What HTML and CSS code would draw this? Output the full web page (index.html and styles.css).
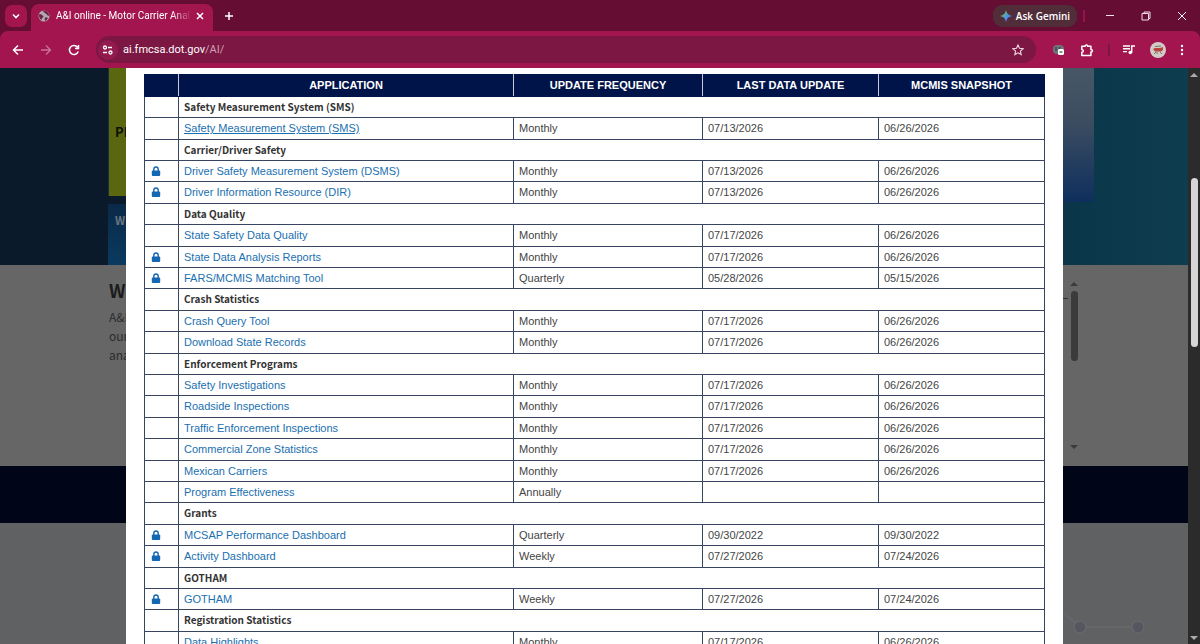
FILE: index.html
```html
<!DOCTYPE html>
<html lang="en">
<head>
    <meta charset="UTF-8">
    <meta name="viewport" content="width=device-width, initial-scale=1.0">
    <title>A&amp;I online - Motor Carrier Analysis</title>
    <link rel="stylesheet" href="styles.css">
</head>
<body>

<!-- Browser title bar -->
<header class="titlebar">
    <button class="tab-search" aria-label="Search tabs">
        <svg width="10" height="10" viewBox="0 0 10 10"><path d="M2 3.5l3 3 3-3" fill="none" stroke="#fff" stroke-width="1.6"/></svg>
    </button>
    <div class="tab">
        <svg class="globe" width="12" height="12" viewBox="0 0 12 12"><circle cx="6" cy="6" r="5.500" fill="#b4a9b1"/><path d="M1.200 4.200c1.800-.4 2.300.8 3.500 1.300s1 1.700-.2 2.200-.3 1.600-.8 2.200C1.500 8.800.6 6.500 1.200 4.200zM5.500.8c-.8 1.500 1 1.400 1.400 2.300S9 4 9.500 5.300s1 .4 1.700.2C11 2.800 8.800.6 5.500.8zM7.200 7.500c.9-.7 2.200-.3 2.700.5-.6 1.400-1.400 2.300-2.700 2.900-.7-1-.7-2.400 0-3.400z" fill="#6c2347"/></svg>
        <span class="tab-title">A&amp;I online - Motor Carrier Anal</span>
        <button class="tab-close" aria-label="Close tab">
            <svg width="8" height="8" viewBox="0 0 8 8"><path d="M1 1l6 6M7 1L1 7" stroke="#fff" stroke-width="1.500"/></svg>
        </button>
    </div>
    <button class="new-tab" aria-label="New tab">
        <svg width="10" height="10" viewBox="0 0 10 10"><path d="M5 1v8M1 5h8" stroke="#fff" stroke-width="1.500"/></svg>
    </button>
    <div class="window-controls">
        <button class="gemini">
            <svg width="12" height="12" viewBox="0 0 12 12"><defs><linearGradient id="spark" x1="0" y1="0" x2="1" y2="1"><stop offset="0" stop-color="#e8756a"/><stop offset=".35" stop-color="#5fae8c"/><stop offset=".6" stop-color="#4c8df0"/><stop offset="1" stop-color="#5b9bf5"/></linearGradient></defs><path d="M6 0c.6 3.600 2.400 5.400 6 6-3.600.6-5.400 2.400-6 6-.6-3.600-2.400-5.400-6-6 3.600-.6 5.400-2.400 6-6z" fill="url(#spark)"/></svg>
            Ask Gemini
        </button>
        <span class="divider"></span>
        <button aria-label="Minimize"><svg width="10" height="10" viewBox="0 0 10 10"><path d="M1 4.500h8" stroke="#f3dfe8"/></svg></button>
        <button aria-label="Restore"><svg width="10" height="10" viewBox="0 0 10 10"><path d="M1 2.500h6.500v6.500H1zM3 2.500V1h6v6.500H7.500" fill="none" stroke="#f3dfe8"/></svg></button>
        <button aria-label="Close"><svg width="10" height="10" viewBox="0 0 10 10"><path d="M1 1l8 8M9 1L1 9" stroke="#fff"/></svg></button>
    </div>
</header>

<!-- Address bar -->
<nav class="toolbar">
    <button aria-label="Back"><svg width="12" height="12" viewBox="0 0 12 12"><path d="M11 6H2M6 1.500L1.500 6 6 10.500" fill="none" stroke="#fff" stroke-width="1.500"/></svg></button>
    <button aria-label="Forward"><svg width="12" height="12" viewBox="0 0 12 12"><path d="M1 6h9M6 1.500L10.500 6 6 10.500" fill="none" stroke="#c9709a" stroke-width="1.300"/></svg></button>
    <button aria-label="Reload"><svg width="12" height="12" viewBox="0 0 12 12"><path d="M10.200 7.500A4.500 4.500 0 1 1 9.500 3.200M10.500 1v3.500H7" fill="none" stroke="#fff" stroke-width="1.500"/></svg></button>
    <div class="address">
        <button class="site-info" aria-label="Site information"><svg width="12" height="12" viewBox="0 0 12 12"><g fill="none" stroke="#fff" stroke-width="1.300"><circle cx="3" cy="3.500" r="1.500"/><path d="M6 3.500h4M1 8.500h4"/><circle cx="8.500" cy="8.500" r="1.500"/></g></svg></button>
        <a class="url" href="#">ai.fmcsa.dot.gov<span>/AI/</span></a>
        <button class="star" aria-label="Bookmark"><svg width="12" height="12" viewBox="0 0 12 12"><path d="M6 1l1.500 3.300 3.600.4-2.700 2.400.8 3.500L6 8.800l-3.200 1.800.8-3.500L.9 4.700l3.600-.4z" fill="none" stroke="#f0d5e2" stroke-width="1.100"/></svg></button>
    </div>
    <div class="extensions">
        <button aria-label="Extension"><svg width="14" height="14" viewBox="0 0 14 14"><rect x="1" y="2" width="11" height="9" rx="4" fill="#707479"/><path d="M4 4v4M7.500 4v2" stroke="#35434a" stroke-width="1.300"/><rect x="6" y="6" width="6" height="6" rx="1.500" fill="#fff"/><path d="M7.500 9h3" stroke="#4a7d56" stroke-width="1.500"/></svg></button>
        <button aria-label="Extensions"><svg width="14" height="14" viewBox="0 0 14 14"><path d="M1.800 3.300h3.400c-.3-1.900 2.800-1.900 2.500 0h3.200v3.200c1.900-.3 1.900 2.800 0 2.500v3.500H1.800V9.300c2-.2 2-2.600 0-2.800z" fill="none" stroke="#fff" stroke-width="1.500" stroke-linejoin="round"/></svg></button>
        <span class="divider dark"></span>
        <button aria-label="Media"><svg width="14" height="14" viewBox="0 0 14 14"><path d="M1 3h7M1 5.800h7M1 8.600h4" stroke="#fff" stroke-width="1.400"/><circle cx="8.300" cy="9.500" r="1.800" fill="#fff"/><path d="M9.700 9.500V3H13" fill="none" stroke="#fff" stroke-width="1.500"/></svg></button>
        <button aria-label="Profile"><svg width="16" height="16" viewBox="0 0 16 16"><circle cx="8" cy="8" r="8" fill="#d3cbc5"/><path d="M3 7l2-1h5l3-1v3l-2 1.500H5z" fill="#b8433e"/><path d="M5 4.500l6-.5M4 12l2-2M10 10l2 2M7 10v2" stroke="#77736d" fill="none"/></svg></button>
        <button aria-label="Menu"><svg width="4" height="12" viewBox="0 0 4 12"><g fill="#fff"><circle cx="2" cy="2" r="1.200"/><circle cx="2" cy="6" r="1.200"/><circle cx="2" cy="10" r="1.200"/></g></svg></button>
    </div>
</nav>

<div class="viewport">
    <div class="page">
        <!-- Dimmed page behind the dialog -->
        <div class="backdrop">
            <section class="hero">
                <div class="hero-tiles">
                    <div class="tile green">PI</div>
                    <div class="tile blue">W</div>
                </div>
                <div class="hero-panel"></div>
            </section>
            <section class="intro">
                <div class="intro-text">
                    <h2>W</h2>
                    <p>A&amp;I<br>our<br>ana</p>
                </div>
                <div class="news">
                    <span class="rule"></span>
                    <div class="news-scroll">
                        <span class="arrow up"></span>
                        <span class="news-thumb"></span>
                        <span class="arrow down"></span>
                    </div>
                </div>
            </section>
            <section class="band"></section>
            <section class="network">
                <svg width="96" height="50" viewBox="0 0 96 50"><path d="M0 14l16 14h58" fill="none" stroke="#66676b" stroke-width="2"/><g fill="#55565f" stroke="#66676b" stroke-width="1.500"><circle cx="16" cy="28" r="6"/><circle cx="74" cy="28" r="6"/></g></svg>
            </section>
        </div>

        <main class="modal">
            <table class="app-list" id="app-list">
                <colgroup>
                    <col class="col-lock"><col class="col-app"><col class="col-freq"><col class="col-update"><col class="col-snap">
                </colgroup>
                <thead>
                    <tr>
                        <th></th>
                        <th>APPLICATION</th>
                        <th>UPDATE FREQUENCY</th>
                        <th>LAST DATA UPDATE</th>
                        <th>MCMIS SNAPSHOT</th>
                    </tr>
                </thead>
                <tbody></tbody>
            </table>
        </main>
    </div>
    <div class="scrollbar">
        <span class="arrow up"></span>
        <span class="thumb"></span>
        <span class="arrow down"></span>
    </div>
</div>

<script>
    const groups = [
        { name: 'Safety Measurement System (SMS)', apps: [
            { name: 'Safety Measurement System (SMS)', freq: 'Monthly', update: '07/13/2026', snapshot: '06/26/2026', active: true }
        ] },
        { name: 'Carrier/Driver Safety', apps: [
            { name: 'Driver Safety Measurement System (DSMS)', freq: 'Monthly', update: '07/13/2026', snapshot: '06/26/2026', locked: true },
            { name: 'Driver Information Resource (DIR)', freq: 'Monthly', update: '07/13/2026', snapshot: '06/26/2026', locked: true }
        ] },
        { name: 'Data Quality', apps: [
            { name: 'State Safety Data Quality', freq: 'Monthly', update: '07/17/2026', snapshot: '06/26/2026' },
            { name: 'State Data Analysis Reports', freq: 'Monthly', update: '07/17/2026', snapshot: '06/26/2026', locked: true },
            { name: 'FARS/MCMIS Matching Tool', freq: 'Quarterly', update: '05/28/2026', snapshot: '05/15/2026', locked: true }
        ] },
        { name: 'Crash Statistics', apps: [
            { name: 'Crash Query Tool', freq: 'Monthly', update: '07/17/2026', snapshot: '06/26/2026' },
            { name: 'Download State Records', freq: 'Monthly', update: '07/17/2026', snapshot: '06/26/2026' }
        ] },
        { name: 'Enforcement Programs', apps: [
            { name: 'Safety Investigations', freq: 'Monthly', update: '07/17/2026', snapshot: '06/26/2026' },
            { name: 'Roadside Inspections', freq: 'Monthly', update: '07/17/2026', snapshot: '06/26/2026' },
            { name: 'Traffic Enforcement Inspections', freq: 'Monthly', update: '07/17/2026', snapshot: '06/26/2026' },
            { name: 'Commercial Zone Statistics', freq: 'Monthly', update: '07/17/2026', snapshot: '06/26/2026' },
            { name: 'Mexican Carriers', freq: 'Monthly', update: '07/17/2026', snapshot: '06/26/2026' },
            { name: 'Program Effectiveness', freq: 'Annually', update: '', snapshot: '' }
        ] },
        { name: 'Grants', apps: [
            { name: 'MCSAP Performance Dashboard', freq: 'Quarterly', update: '09/30/2022', snapshot: '09/30/2022', locked: true },
            { name: 'Activity Dashboard', freq: 'Weekly', update: '07/27/2026', snapshot: '07/24/2026', locked: true }
        ] },
        { name: 'GOTHAM', apps: [
            { name: 'GOTHAM', freq: 'Weekly', update: '07/27/2026', snapshot: '07/24/2026', locked: true }
        ] },
        { name: 'Registration Statistics', apps: [
            { name: 'Data Highlights', freq: 'Monthly', update: '07/17/2026', snapshot: '06/26/2026' }
        ] }
    ];

    const lock = '<svg class="lock" width="10" height="10" viewBox="0 0 10 10"><path d="M2.800 5V3.200a2.200 2.200 0 0 1 4.400 0V5" fill="none" stroke="#1467b3" stroke-width="1.400"/><rect x=".8" y="4.500" width="8.400" height="5.500" rx="1" fill="#1467b3"/></svg>';
    const tbody = document.querySelector('#app-list tbody');

    groups.forEach(group => {
        const head = tbody.insertRow();
        head.className = 'group';
        head.innerHTML = `<td></td><td colspan="4">${group.name}</td>`;

        group.apps.forEach(app => {
            const row = tbody.insertRow();
            row.innerHTML = `
                <td>${app.locked ? lock : ''}</td>
                <td><a href="#" class="${app.active ? 'active' : ''}">${app.name}</a></td>
                <td>${app.freq}</td>
                <td>${app.update}</td>
                <td>${app.snapshot}</td>
            `;
        });
    });
</script>

</body>
</html>
```
FILE: styles.css
```css
* {
    box-sizing: border-box;
}

body {
    margin: 0;
    height: 100vh;
    display: flex;
    flex-direction: column;
    overflow: hidden;
    font-family: "Liberation Sans", Arial, sans-serif;
    font-size: 11px;
    background: #650d32;
}

button {
    display: flex;
    align-items: center;
    justify-content: center;
    padding: 0;
    border: none;
    background: none;
    color: #fff;
    font: inherit;
}

/* Browser title bar */
.titlebar {
    display: flex;
    align-items: center;
    height: 31px;
    padding-left: 5px;
    flex-shrink: 0;
    font-family: "Open Sans", "Noto Sans", sans-serif;
}

.tab-search {
    width: 22px;
    height: 22px;
    border-radius: 7px;
    background: #a2154f;
}

.tab {
    display: flex;
    align-items: center;
    align-self: flex-end;
    width: 182px;
    height: 27px;
    margin-left: 4px;
    padding: 0 9px 4px 7px;
    border-radius: 8px 8px 0 0;
    background: #a2154f;
    color: #fff;
    font-family: Roboto, "Open Sans", sans-serif;
    font-size: 10px;
}

.tab-title {
    flex: 1;
    margin: 0 4px 0 6px;
    white-space: nowrap;
    mask-image: linear-gradient(to right, #000 85%, transparent);
}

.new-tab {
    width: 24px;
    height: 24px;
    margin-left: 4px;
}

.window-controls {
    display: flex;
    align-items: center;
    gap: 26px;
    margin-left: auto;
    padding-right: 13px;
}

.gemini {
    gap: 4px;
    width: 84px;
    height: 22px;
    margin-right: -20px;
    border-radius: 9px;
    background: #512d3a;
    font-size: 10px;
    font-weight: 600;
}

.divider {
    width: 2px;
    height: 12px;
    margin-right: -6px;
    background: #94134a;
}

/* Address bar */
.toolbar {
    display: flex;
    align-items: center;
    gap: 16px;
    height: 37px;
    padding: 0 16px 0 12px;
    flex-shrink: 0;
    border-radius: 8px 8px 0 0;
    background: #a2154f;
}

.address {
    display: flex;
    flex: 1;
    align-items: center;
    height: 27px;
    padding: 0 12px 0 2px;
    border-radius: 14px;
    background: #7b1742;
}

.site-info {
    width: 20px;
    height: 20px;
    border-radius: 10px;
    background: #921a4e;
}

.url {
    flex: 1;
    margin-left: 5px;
    color: #fff;
    font-family: Roboto, "Open Sans", sans-serif;
    font-size: 11px;
    text-decoration: none;
}

.url span {
    color: #cfa0b5;
}

.extensions {
    display: flex;
    align-items: center;
    gap: 14px;
}

.divider.dark {
    margin-right: -2px;
    background: #7b1742;
}

/* Page area */
.viewport {
    display: flex;
    flex: 1;
    min-height: 0;
}

.page {
    position: relative;
    flex: 1;
    overflow: hidden;
}

.backdrop {
    display: flex;
    flex-direction: column;
    height: 100%;
    font-family: "Noto Sans CJK SC", sans-serif;
}

.hero {
    display: flex;
    justify-content: space-between;
    height: 197px;
    flex-shrink: 0;
    padding: 0 94px 0 108px;
    background: linear-gradient(to right, #0a1a2b, #0a1a2b 10%, #0b364a 90%, #0d3d4e);
}

.hero-tiles {
    display: flex;
    flex-direction: column;
    gap: 8px;
}

.tile {
    width: 120px;
    padding-left: 7px;
    font-weight: bold;
}

.tile.green {
    height: 128px;
    line-height: 128px;
    padding-left: 6px;
    border-left: 1px solid #18303c;
    background: #5b6610;
    color: #0d1108;
    font-size: 13px;
}

.tile.blue {
    flex: 1;
    line-height: 32px;
    background: linear-gradient(#0a2947, #0a3a60);
    color: #697780;
}

.hero-panel {
    width: 80px;
    height: 134px;
    background: linear-gradient(#475766, #3c4d61 40%, #0e2f5d);
}

.intro {
    display: flex;
    justify-content: space-between;
    height: 201px;
    flex-shrink: 0;
    padding: 11px 110px 0 109px;
    background: #666;
}

.intro h2 {
    margin: 0;
    color: #1b1b1b;
    font-size: 18px;
    line-height: 28px;
}

.intro p {
    margin: 3px 0 0;
    color: #2b2b2b;
    font-size: 12px;
    line-height: 19px;
}

.news {
    display: flex;
    gap: 2px;
    padding-top: 6px;
}

.rule {
    width: 30px;
    height: 1px;
    margin-top: 16px;
    background: #333;
}

.news-scroll {
    display: flex;
    flex-direction: column;
    align-items: center;
    height: 167px;
}

.news-thumb {
    width: 7px;
    height: 70px;
    margin-top: 5px;
    border-radius: 4px;
    background: #3b3b3b;
}

.arrow {
    border: 4px solid transparent;
}

.arrow.up {
    border-top: none;
    border-bottom-color: #3b3b3b;
}

.arrow.down {
    margin-top: auto;
    border-bottom: none;
    border-top-color: #3b3b3b;
}

.band {
    height: 57px;
    flex-shrink: 0;
    background: #000618;
}

.network {
    display: flex;
    flex: 1;
    align-items: flex-end;
    justify-content: flex-end;
    padding-right: 28px;
    background: #606162;
}

.network svg {
    margin-bottom: -5px;
}

/* Dialog laid over the page */
.modal {
    position: absolute;
    top: 0;
    bottom: 0;
    left: 126px;
    right: 125px;
    padding: 6px 18px 0;
    overflow: hidden;
    background: #fff;
}

.app-list {
    width: 100%;
    border-collapse: collapse;
    table-layout: fixed;
    color: #444;
    font-size: 11px;
}

.col-lock {
    width: 34px;
}

.col-freq {
    width: 21%;
}

.col-update {
    width: 176px;
}

.col-snap {
    width: 166px;
}

.app-list th {
    height: 22px;
    padding: 0 0 2px;
    border: 1px solid #00144a;
    border-right-color: #c5cad6;
    background: #00144a;
    color: #fff;
    line-height: 16px;
}

.app-list th:last-child {
    border-right-color: #00144a;
}

.app-list td {
    height: 21px;
    padding: 0 5px 1px;
    border: 1px solid #384560;
    line-height: 16px;
}

.app-list tr:nth-child(5n) td,
.app-list tr:nth-child(5n+2) td {
    height: 22px;
}

.app-list .group td {
    color: #333;
    font-family: "Noto Sans CJK SC", sans-serif;
    font-size: 10px;
    font-weight: bold;
}

.app-list a {
    color: #1a6fb0;
    text-decoration: none;
}

.app-list a.active {
    text-decoration: underline;
}

.lock {
    display: block;
    margin-left: 1px;
}

/* Main scrollbar */
.scrollbar {
    display: flex;
    flex-direction: column;
    align-items: center;
    width: 12px;
    padding: 5px 0 4px;
    background: #2b2b2b;
}

.scrollbar .arrow.up {
    border-bottom-color: #aaa;
}

.scrollbar .arrow.down {
    border-top-color: #aaa;
}

.thumb {
    width: 7px;
    height: 169px;
    margin-top: 101px;
    border-radius: 4px;
    background: #d6d6d6;
}
```
